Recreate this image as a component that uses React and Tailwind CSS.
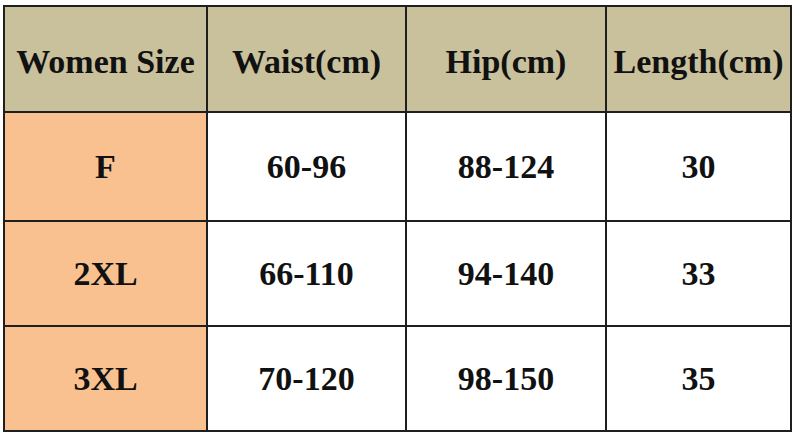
const header = ["Women Size", "Waist(cm)", "Hip(cm)", "Length(cm)"];
const rows = [
  ["F", "60-96", "88-124", "30"],
  ["2XL", "66-110", "94-140", "33"],
  ["3XL", "70-120", "98-150", "35"],
];

export default function App() {
  return (
    <div className="w-[800px] h-[438px] bg-white pt-[5px] pl-[3px]" style={{ fontFamily: '"Liberation Serif", "Times New Roman", serif' }}>
      <div className="grid w-[789px] grid-cols-[201px_197px_198px_183px] grid-rows-[104px_107px_103px_103px] gap-[2px] bg-[#1f1f1f] p-[2px] text-[34px] font-bold text-[#111]">
        {header.map((h) => (
          <div key={h} className="flex items-center justify-center bg-[#c9c19c] pt-[4px]">
            {h}
          </div>
        ))}
        {rows.map((r) =>
          r.map((c, i) => (
            <div
              key={r[0] + i}
              className={`flex items-center justify-center ${i === 0 ? "bg-[#f9c190]" : "bg-white"}`}
            >
              {c}
            </div>
          ))
        )}
      </div>
    </div>
  );
}
